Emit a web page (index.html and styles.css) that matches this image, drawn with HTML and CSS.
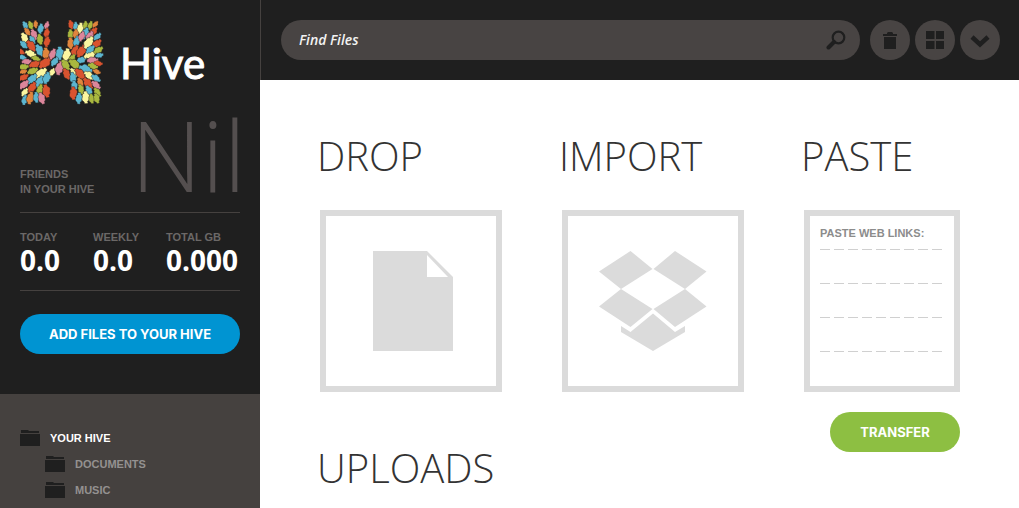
FILE: index.html
```html
<!DOCTYPE html>
<html lang="en">
<head>
<meta charset="utf-8">
<title>Hive</title>
<link rel="stylesheet" href="styles.css">
</head>
<body>
<svg class="defs" aria-hidden="true">
  <symbol id="leaf" viewBox="-9 -15 18 30" overflow="visible"><path d="M-3-15L3-15C5-13 3-11 5-9C10-6 9-2 7 2C8 6 6 9 3 10C5 12 4 14 3 15L-3 15C-4 13-3 11-6 9C-10 5-8 2-7-2C-8-6-6-9-3-10C-5-12-4-14-3-15Z"/></symbol>
  <symbol id="folder" viewBox="0 0 20 16"><path d="M1 0h7l1 1h10v2H1zM0 4h20v12H0z"/></symbol>
</svg>
<div class="app">
  <aside class="sidebar">
    <section class="summary">
      <a class="brand" href="#">
        <svg class="brand-mark" viewBox="32 30 252 255" aria-hidden="true"></svg>
        <span class="brand-name">Hive</span>
      </a>
      <div class="friends">
        <span class="label">FRIENDS<br>IN YOUR HIVE</span>
        <strong class="friends-count">Nil</strong>
      </div>
      <dl class="stats">
        <div><dt class="label">TODAY</dt><dd>0.0</dd></div>
        <div><dt class="label">WEEKLY</dt><dd>0.0</dd></div>
        <div><dt class="label">TOTAL GB</dt><dd>0.000</dd></div>
      </dl>
      <button class="button add" type="button">ADD FILES TO YOUR HIVE</button>
    </section>
    <nav class="tree">
      <a class="root" href="#"><svg class="folder"><use href="#folder"/></svg>YOUR HIVE</a>
      <a href="#"><svg class="folder"><use href="#folder"/></svg>DOCUMENTS</a>
      <a href="#"><svg class="folder"><use href="#folder"/></svg>MUSIC</a>
      <a href="#"><svg class="folder"><use href="#folder"/></svg></a>
    </nav>
  </aside>
  <div class="content">
    <header class="toolbar">
      <form class="search">
        <input type="search" placeholder="Find Files" aria-label="Find Files">
        <button type="button" aria-label="Search"><svg width="20" height="20" viewBox="0 0 20 20"><circle cx="12.500" cy="7.500" r="5.800" fill="none" stroke="#1f1f1f" stroke-width="2.200"/><path d="M8 12L2.500 17.500" stroke="#1f1f1f" stroke-width="4" stroke-linecap="round"/></svg></button>
      </form>
      <div class="actions">
        <button class="round" type="button" aria-label="Trash"><svg width="14" height="18" viewBox="0 0 14 18"><path d="M0 3h4V2l1-1h4l1 1v1h4v2H0zM1 6h12v12H1z"/></svg></button>
        <button class="round" type="button" aria-label="Grid"><svg width="18" height="18" viewBox="0 0 18 18"><path d="M0 0h8.500v8H0zM10 0h8v8h-8zM0 10h8.500v8H0zM10 10h8v8h-8z"/></svg></button>
        <button class="round" type="button" aria-label="More"><svg width="20" height="16" viewBox="0 0 20 16"><path d="M2 5L10 12.500l8-7.500" fill="none" stroke="#1f1f1f" stroke-width="4.500"/></svg></button>
      </div>
    </header>
    <main class="main">
      <div class="panels">
        <section>
          <h2>DROP</h2>
          <button class="card" type="button" aria-label="Drop files"><svg width="84" height="100" viewBox="-4 0 84 100"><path fill-rule="evenodd" d="M0 0h54l26 26v74H0zM54 4v22h21z"/></svg></button>
        </section>
        <section>
          <h2>IMPORT</h2>
          <button class="card" type="button" aria-label="Import from Dropbox"><svg width="108" height="100" viewBox="0 0 108 100"><path d="M31.500 0L0 20.500L22 38L53.500 18zM76 0L54.500 18L86 38L107.500 20.500zM22 38L0 55.500L31.500 76L53.500 58zM86 38L54.500 58L76 76L107.500 55.500zM54 62.500L31.500 81L22 75v6L54 100L86 81v-6L76 81z"/></svg></button>
        </section>
        <section>
          <h2>PASTE</h2>
          <form class="paste">
            <div class="card note">
              <label for="links">PASTE WEB LINKS:</label>
              <textarea id="links"></textarea>
            </div>
            <button class="button transfer" type="button">TRANSFER</button>
          </form>
        </section>
      </div>
      <h2 class="uploads">UPLOADS</h2>
    </main>
  </div>
</div>
<script src="logo.js"></script>
</body>
</html>
```
FILE: logo.js
```js
const colors = { b: "#5cb5cf", r: "#d9532f", g: "#a9b83f", o: "#e0853d", p: "#dc869b", c: "#fbf6a0" };
// x, y, angle, color, scale
const leaves = [
  [48,46,-30,"b",.85],[64,46,-22,"g",.85],[79,43,-5,"o",.75],[112,46,18,"p",.8],[94,56,8,"b",1],
  [54,65,-38,"o",.85],[74,74,-22,"p",1.1],[112,69,8,"r",.95],[46,84,-28,"c",1.1],[92,88,-12,"g",1.05],[69,90,-32,"b",.9],
  [113,95,8,"r",1.05],[43,104,-48,"b",.95],[66,108,-40,"r",1.25],[91,121,-30,"b",1.25],[110,131,-4,"o",1.2],
  [35,125,-62,"r",.8],[64,131,-70,"c",1.1],[39,142,-78,"b",.8],[80,146,-75,"g",.9],[52,155,85,"p",.95],
  [76,163,70,"r",1.15],[43,171,80,"g",1],[107,159,48,"r",1.4],[130,132,20,"p",1.1],[151,130,0,"b",1.3],
  [136,155,35,"b",1],[42,185,75,"o",.75],[70,183,65,"g",1.1],[95,190,48,"c",1.35],[128,187,30,"c",.9],[151,174,15,"p",1.4],
  [43,202,60,"r",1],[68,207,42,"b",1.2],[90,216,28,"b",1.25],[112,204,15,"b",1.2],
  [44,224,45,"p",1.1],[68,233,28,"r",1.2],[92,240,12,"g",1.15],[111,243,-12,"r",1.3],
  [46,247,34,"c",.9],[46,270,12,"b",1],[63,264,12,"o",1.25],[81,262,-5,"b",1.05],[97,265,-18,"p",1.15],
  [185,44,-15,"r",.9],[199,49,0,"b",.85],[213,55,8,"c",1.1],[228,45,5,"g",.8],[243,46,15,"g",.85],[258,43,38,"o",.75],
  [184,73,-5,"g",1],[199,72,2,"o",.95],[228,70,20,"b",1.15],[252,65,42,"r",1],
  [184,100,-5,"o",1.15],[202,95,12,"b",1.1],[217,79,18,"p",1],[241,79,28,"p",1.1],[264,80,45,"b",.9],
  [197,123,22,"r",1.2],[216,124,28,"r",1.35],[238,98,32,"c",1.35],[262,101,48,"r",1.1],
  [172,135,10,"c",1.3],[188,145,35,"g",.9],[216,150,65,"b",1.05],[242,134,65,"c",1.25],[267,120,58,"g",1],
  [243,118,48,"b",1],[250,151,85,"p",1.1],[270,136,75,"b",.8],[169,165,-35,"g",1.2],[196,162,-58,"g",1.3],
  [229,177,-72,"b",1.35],[251,168,-75,"g",1],[267,160,-82,"r",.85],[172,192,-28,"r",1.15],[194,188,-38,"c",1],
  [213,192,-45,"r",1.3],[240,197,-55,"c",1.15],[262,185,-70,"o",.8],[191,204,-12,"b",1.1],[213,218,-25,"o",1],
  [236,221,-38,"r",1.3],[260,205,-55,"b",1],[195,229,-5,"b",1.1],[215,238,-18,"g",1],[260,225,-50,"p",1.05],
  [192,250,-3,"r",1.25],[239,243,-24,"b",1.1],[264,247,-35,"g",1],[209,265,4,"b",1.1],[229,262,-4,"c",1.2],[247,266,-10,"g",.95],[262,265,-18,"g",1]
];
document.querySelector(".brand-mark").innerHTML = leaves.map(([x, y, a, c, s]) =>
  `<use href="#leaf" x="-9" y="-15" width="18" height="30" fill="${colors[c]}" stroke="#1f1f1f" stroke-width="1" transform="translate(${x} ${y}) rotate(${a}) scale(${s * 1.15} ${s * 1.05})"/>`
).join("");
```
FILE: styles.css
```css
* { box-sizing: border-box; }
body { margin: 0; background: #fff; font-family: "Liberation Sans", Arial, sans-serif; }
button, input, textarea { font: inherit; border: 0; padding: 0; background: none; outline: 0; }
button { cursor: pointer; }
a { text-decoration: none; }
svg { display: block; }
.defs { display: none; }

.app { display: flex; height: 100vh; overflow: hidden; }

.sidebar { flex: 0 0 260px; display: flex; flex-direction: column; background: #45413f; }
.summary { padding: 20px 20px 40px; background: #1f1f1f; }
.brand { display: flex; align-items: center; gap: 16px; }
.brand-mark { width: 84px; height: 85px; }
.brand-name { color: #fff; font: 400 42px/50px Lato, sans-serif; -webkit-text-stroke: 1px #fff; stroke-linejoin: round; }
.label { color: #6b6867; font-size: 11px; line-height: 15px; font-weight: 700; }
.friends { display: flex; justify-content: space-between; align-items: flex-end; height: 108px; padding-bottom: 15px; border-bottom: 1px solid #45413f; }
.friends-count { margin-right: -6px; color: #544f4f; font: 300 98px/86px "Open Sans", sans-serif; }
.stats { display: grid; grid-template-columns: 73px 73px 1fr; margin: 0 0 23px; padding: 17px 0 15px; border-bottom: 1px solid #45413f; }
.stats dd { margin: 0; color: #fff; font: 700 28px/30px "Open Sans", sans-serif; }

.button { height: 40px; border-radius: 20px; color: #fff; font: 700 13px/40px Inter, sans-serif; white-space: nowrap; }
.add { display: block; width: 100%; background: #0094d2; }

.tree { display: flex; flex-direction: column; padding: 31px 20px 0; }
.tree a { display: flex; flex: 0 0 26px; align-items: center; gap: 10px; padding-left: 25px; color: #949190; font-size: 11px; font-weight: 700; }
.tree .root { padding-left: 0; color: #fff; }
.folder { width: 20px; height: 16px; fill: #1f1f1f; }

.content { flex: 1; min-width: 0; }
.toolbar { display: flex; gap: 10px; padding: 20px 19px 20px 20px; border-left: 1px solid #45413f; background: #1f1f1f; }
.search { flex: 1; display: flex; align-items: center; height: 40px; padding: 0 14px 0 18px; border-radius: 20px; background: #484443; }
.search input { flex: 1; min-width: 0; color: #fff; font: italic 600 14px/20px "Open Sans", sans-serif; }
.search input::placeholder { color: #f2f2f2; opacity: 1; }
.actions { display: flex; gap: 5px; }
.round { display: grid; place-items: center; width: 40px; height: 40px; border-radius: 50%; background: #484443; fill: #1f1f1f; }

.main { padding: 48px 59px 0 60px; }
.panels { display: grid; grid-template-columns: 182px 182px 1fr; gap: 60px; }
h2 { margin: 0 0 26px -3px; color: #333; font: 300 40px/56px "Open Sans", sans-serif; white-space: nowrap; }
.card { display: grid; place-items: center; width: 100%; height: 182px; border: 6px solid #dbdbdb; background: #fff; fill: #dbdbdb; }
.note { display: block; place-items: normal; padding: 10px; }
.note label { display: block; color: #8c8c8c; font-size: 11px; line-height: 15px; font-weight: 700; white-space: nowrap; }
.note textarea {
  display: block; width: 100%; max-width: 124px; height: 120px; margin-top: 8px; resize: none; overflow: hidden; font-size: 11px; line-height: 34px;
  background: repeating-linear-gradient(90deg, transparent 0 10px, #fff 10px 14px), repeating-linear-gradient(#d0d0d0 0 1px, transparent 1px 34px);
}
.paste { display: flex; flex-direction: column; align-items: flex-end; gap: 20px; }
.transfer { width: 130px; background: #8dbf42; }
.uploads { margin-top: -12px; }
```
